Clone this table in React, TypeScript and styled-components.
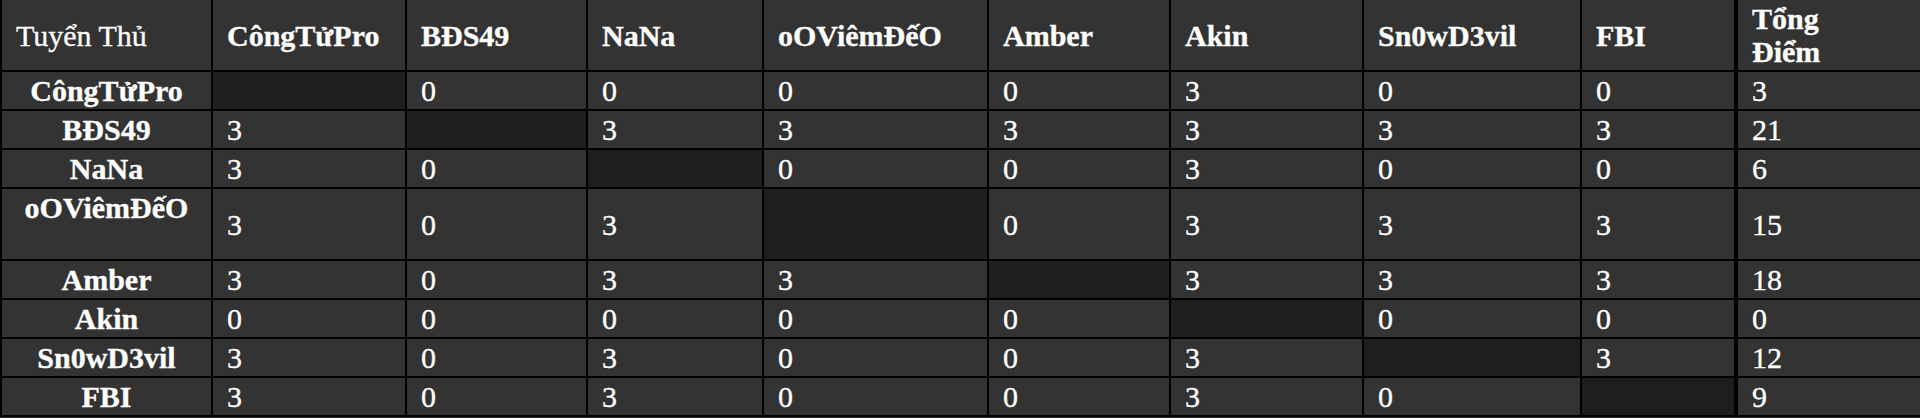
import { styled, createGlobalStyle } from 'styled-components'

const GlobalStyle = createGlobalStyle`
  html, body {
    margin: 0;
    padding: 0;
    background-color: #333333;
  }
  body {
    font-family: 'Liberation Serif', 'Times New Roman', serif;
    color: #ffffff;
  }
`

const players = ['CôngTửPro', 'BĐS49', 'NaNa', 'oOViêmĐếO', 'Amber', 'Akin', 'Sn0wD3vil', 'FBI']

// null = ô đối đầu chính mình
const scores: (number | null)[][] = [
  [null, 0, 0, 0, 0, 3, 0, 0],
  [3, null, 3, 3, 3, 3, 3, 3],
  [3, 0, null, 0, 0, 3, 0, 0],
  [3, 0, 3, null, 0, 3, 3, 3],
  [3, 0, 3, 3, null, 3, 3, 3],
  [0, 0, 0, 0, 0, null, 0, 0],
  [3, 0, 3, 0, 0, 3, null, 3],
  [3, 0, 3, 0, 0, 3, 0, null],
]

const colWidths = [211, 194, 181, 176, 225, 182, 193, 218, 155, 185]

const App = () => {
  return (
    <>
      <GlobalStyle />
      <Table>
        <colgroup>
          {colWidths.map((w, i) => (
            <col key={i} style={{ width: w }} />
          ))}
        </colgroup>
        <thead>
          <tr>
            <HeadCell plain>Tuyển Thủ</HeadCell>
            {players.map(p => (
              <HeadCell key={p}>{p}</HeadCell>
            ))}
            <HeadCell total>
              Tổng
              <br />
              Điểm
            </HeadCell>
          </tr>
        </thead>
        <tbody>
          {players.map((p, r) => {
            const total = scores[r].reduce<number>((s, v) => s + (v ?? 0), 0)
            return (
              <tr key={p}>
                <NameCell>
                  {p === 'oOViêmĐếO' ? (
                    <>
                      {p}
                      <br />
                      {'\u00a0'}
                    </>
                  ) : (
                    p
                  )}
                </NameCell>
                {scores[r].map((v, c) => (
                  <Cell key={c} self={v === null}>
                    {v ?? ''}
                  </Cell>
                ))}
                <Cell total>{total}</Cell>
              </tr>
            )
          })}
        </tbody>
      </Table>
    </>
  )
}

export default App

const serif = `'Liberation Serif', 'Times New Roman', serif`

const Table = styled.table`
  width: 1920px;
  table-layout: fixed;
  border-collapse: collapse;
  font-family: ${serif};
  font-size: 30px;
  line-height: 33px;
  border-left: 2px solid #000000;
  -webkit-text-stroke: 0.4px #ffffff;
  text-shadow: 0 0 1px #000000;
`

const HeadCell = styled.th<{ plain?: boolean; total?: boolean }>`
  font-family: ${serif};
  background-color: #333333;
  color: #ffffff;
  text-align: left;
  vertical-align: middle;
  font-weight: ${props => (props.plain ? 'normal' : 'bold')};
  padding: 2px 14px;
  border: 2px solid #000000;
  border-top: none;
  border-left: ${props => (props.total ? '4px' : '2px')} solid #000000;
`

const NameCell = styled.th`
  font-family: ${serif};
  background-color: #333333;
  color: #ffffff;
  text-align: center;
  vertical-align: middle;
  font-weight: bold;
  padding: 2px 8px;
  border: 2px solid #000000;
  white-space: nowrap;
`

const Cell = styled.td<{ self?: boolean; total?: boolean }>`
  font-family: ${serif};
  background-color: ${props => (props.self ? '#1e1e1e' : '#333333')};
  color: #ffffff;
  text-align: left;
  vertical-align: middle;
  padding: 2px 14px;
  border: 2px solid #000000;
  border-left: ${props => (props.total ? '4px' : '2px')} solid #000000;
`
